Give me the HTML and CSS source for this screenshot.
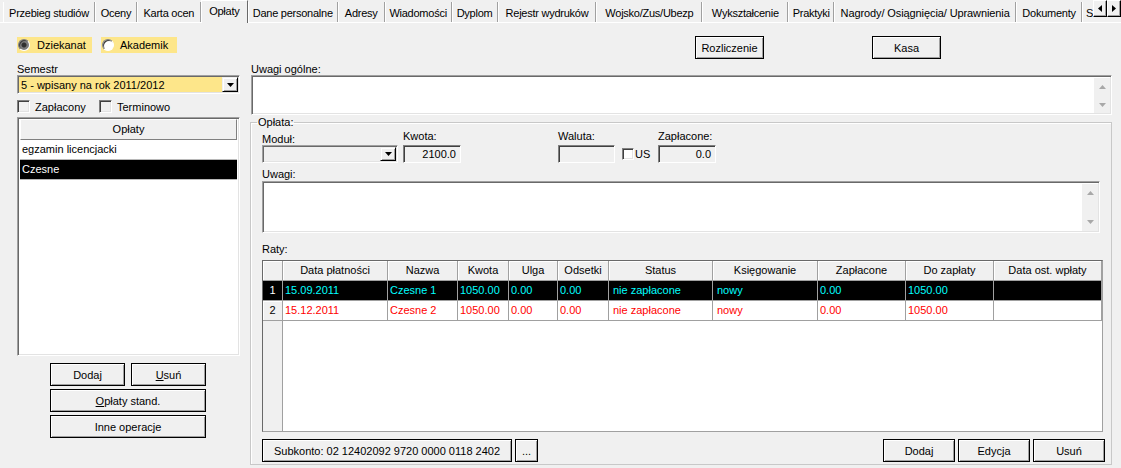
FILE: index.html
```html
<!DOCTYPE html>
<html lang="pl">
<head>
<meta charset="utf-8">
<title>Opłaty</title>
<link rel="stylesheet" href="styles.css">
</head>
<body>
<div class="tabs">
  <div class="tab t1">Przebieg studiów</div>
  <div class="tab t2">Oceny</div>
  <div class="tab t3">Karta ocen</div>
  <div class="tab t4 sel">Opłaty</div>
  <div class="tab t5">Dane personalne</div>
  <div class="tab t6">Adresy</div>
  <div class="tab t7">Wiadomości</div>
  <div class="tab t8">Dyplom</div>
  <div class="tab t9">Rejestr wydruków</div>
  <div class="tab t10">Wojsko/Zus/Ubezp</div>
  <div class="tab t11">Wykształcenie</div>
  <div class="tab t12">Praktyki</div>
  <div class="tab t13">Nagrody/ Osiągnięcia/ Uprawnienia</div>
  <div class="tab t14">Dokumenty</div>
  <div class="tab t15">S</div>
  <div class="spin">
    <div class="sbtn"><svg width="4" height="7" viewBox="0 0 4 7"><path d="M4 0 L0 3.5 L4 7 Z" fill="#000"/></svg></div>
    <div class="sbtn"><svg width="4" height="7" viewBox="0 0 4 7"><path d="M0 0 L4 3.5 L0 7 Z" fill="#000"/></svg></div>
  </div>
</div>

<div class="panel">
  <div class="left">
    <div class="radios">
      <div class="radio"><span class="dot on"></span><span>Dziekanat</span></div>
      <div class="radio"><span class="dot"></span><span>Akademik</span></div>
    </div>
    <div class="lbl sem">Semestr</div>
    <div class="combo yellow">
      <span class="cval">5 - wpisany na rok 2011/2012</span>
      <span class="dd"><svg width="7" height="4" viewBox="0 0 7 4"><path d="M0 0 H7 L3.5 4 Z" fill="#000"/></svg></span>
    </div>
    <div class="checks">
      <div class="chk"><span class="box"></span><span>Zapłacony</span></div>
      <div class="chk"><span class="box"></span><span>Terminowo</span></div>
    </div>
    <div class="list">
      <div class="lhead">Opłaty</div>
      <div class="lrow">egzamin licencjacki</div>
      <div class="lrow lsel">Czesne</div>
    </div>
    <div class="lbtns">
      <div class="brow">
        <button class="btn half">Dodaj</button>
        <button class="btn half"><u>U</u>suń</button>
      </div>
      <button class="btn wide"><u>O</u>płaty stand.</button>
      <button class="btn wide">Inne operacje</button>
    </div>
  </div>

  <div class="right">
    <div class="topbtns">
      <button class="btn tb">Rozliczenie</button>
      <button class="btn tb">Kasa</button>
    </div>
    <div class="lbl ug">Uwagi ogólne:</div>
    <div class="memo m1">
      <div class="vscroll">
        <svg width="7" height="4" viewBox="0 0 7 4"><path d="M0 4 H7 L3.5 0 Z" fill="#a8a8a8"/></svg>
        <svg width="7" height="4" viewBox="0 0 7 4"><path d="M0 0 H7 L3.5 4 Z" fill="#a8a8a8"/></svg>
      </div>
    </div>

    <fieldset class="grp">
      <legend>Opłata:</legend>
      <div class="frow">
        <div class="fld fmod">
          <div class="flbl">Moduł:</div>
          <div class="combo gray">
            <span class="cval"></span>
            <span class="dd"><svg width="7" height="4" viewBox="0 0 7 4"><path d="M0 0 H7 L3.5 4 Z" fill="#000"/></svg></span>
          </div>
        </div>
        <div class="fld fkw">
          <div class="flbl">Kwota:</div>
          <div class="ro">2100.0</div>
        </div>
        <div class="fld fwal">
          <div class="flbl">Waluta:</div>
          <div class="ro"></div>
        </div>
        <div class="us"><span class="box"></span><span>US</span></div>
        <div class="fld fzap">
          <div class="flbl">Zapłacone:</div>
          <div class="ro">0.0</div>
        </div>
      </div>

      <div class="lbl uw">Uwagi:</div>
      <div class="memo m2">
        <div class="vscroll">
          <svg width="7" height="4" viewBox="0 0 7 4"><path d="M0 4 H7 L3.5 0 Z" fill="#a8a8a8"/></svg>
          <svg width="7" height="4" viewBox="0 0 7 4"><path d="M0 0 H7 L3.5 4 Z" fill="#a8a8a8"/></svg>
        </div>
      </div>

      <div class="lbl raty">Raty:</div>
      <div class="grid">
        <div class="grow ghead">
          <div class="c ind"></div>
          <div class="c">Data płatności</div>
          <div class="c">Nazwa</div>
          <div class="c">Kwota</div>
          <div class="c">Ulga</div>
          <div class="c">Odsetki</div>
          <div class="c">Status</div>
          <div class="c">Księgowanie</div>
          <div class="c">Zapłacone</div>
          <div class="c">Do zapłaty</div>
          <div class="c">Data ost. wpłaty</div>
        </div>
        <div class="grow gsel">
          <div class="c ind">1</div>
          <div class="c">15.09.2011</div>
          <div class="c">Czesne 1</div>
          <div class="c">1050.00</div>
          <div class="c">0.00</div>
          <div class="c">0.00</div>
          <div class="c wide4">nie zapłacone</div>
          <div class="c wide4">nowy</div>
          <div class="c">0.00</div>
          <div class="c">1050.00</div>
          <div class="c"></div>
        </div>
        <div class="grow gred">
          <div class="c ind">2</div>
          <div class="c">15.12.2011</div>
          <div class="c">Czesne 2</div>
          <div class="c">1050.00</div>
          <div class="c">0.00</div>
          <div class="c">0.00</div>
          <div class="c wide4">nie zapłacone</div>
          <div class="c wide4">nowy</div>
          <div class="c">0.00</div>
          <div class="c">1050.00</div>
          <div class="c"></div>
        </div>
      </div>

      <div class="bbar">
        <button class="btn sub">Subkonto: 02 12402092 9720 0000 0118 2402</button>
        <button class="btn dots">...</button>
        <div class="spacer"></div>
        <button class="btn bb">Dodaj</button>
        <button class="btn bb">Edycja</button>
        <button class="btn bb">Usuń</button>
      </div>
    </fieldset>
  </div>
</div>
</body>
</html>
```

FILE: styles.css
```css
* { box-sizing: border-box; }
html, body { margin: 0; padding: 0; }
body {
  width: 1121px;
  height: 468px;
  overflow: hidden;
  background: #f0f0f0;
  font-family: "Liberation Sans", Arial, sans-serif;
  font-size: 11px;
  color: #000;
}

/* ---------- tabs ---------- */
.tabs {
  display: flex;
  align-items: flex-end;
  height: 23px;
  padding-left: 3px;
  border-bottom: 1px solid #fff;
}
.tab {
  height: 20px;
  border-left: 1px solid #fff;
  border-right: 1px solid #a0a0a0;
  display: flex;
  align-items: center;
  justify-content: center;
  white-space: nowrap;
  overflow: hidden;
  letter-spacing: -0.25px;
  padding-top: 1px;
}
.tab.sel {
  height: 23px;
  margin-bottom: -1px;
  border-top: 1px solid #fff;
  border-right: 1px solid #696969;
  background: #f0f0f0;
  position: relative;
  z-index: 1;
  align-items: flex-start;
  padding-top: 4px;
}
.t1 { width: 92px; }
.t2 { width: 42px; }
.t3 { width: 64px; }
.t4 { width: 47px; }
.t5 { width: 90px; }
.t6 { width: 47px; }
.t7 { width: 67px; }
.t8 { width: 46px; }
.t9 { width: 99px; }
.t10 { width: 106px; }
.t11 { width: 86px; }
.t12 { width: 46px; }
.t13 { width: 182px; letter-spacing: -0.1px; }
.t14 { width: 66px; }
.t15 { width: 11px; justify-content: flex-start; padding-left: 3px; border-right: none; }
.spin {
  display: flex;
  align-self: flex-start;
  height: 17px;
}
.sbtn {
  width: 14px;
  height: 17px;
  border: 1px solid;
  border-color: #fff #000 #000 #fff;
  box-shadow: inset -1px -1px #a0a0a0;
  background: #f0f0f0;
  display: flex;
  align-items: center;
  justify-content: center;
}

/* ---------- panel ---------- */
.panel {
  display: flex;
  height: 445px;
}
.left {
  width: 223px;
  margin-left: 17px;
  display: flex;
  flex-direction: column;
}
.right {
  width: 862px;
  margin-left: 10px;
  display: flex;
  flex-direction: column;
}

.lbl { height: 12px; line-height: 12px; white-space: nowrap; }

/* radios */
.radios {
  display: flex;
  gap: 9px;
  margin-top: 14px;
  height: 16px;
}
.radio {
  display: flex;
  align-items: center;
  background: #fde68a;
  padding: 0 6px 0 1px;
  gap: 7px;
}
.radio + .radio { padding-right: 9px; gap: 6px; }
.dot {
  width: 12px;
  height: 12px;
  border-radius: 50%;
  background: #fff;
  border: 1px solid;
  border-color: #808080 #fff #fff #808080;
  box-shadow: inset 1px 1px #404040;
}
.dot.on {
  background: radial-gradient(circle, #303030 0 2px, #7c7c7c 3px 100%);
}

.sem { margin-top: 10px; }

/* combo boxes */
.combo {
  display: flex;
  height: 19px;
  border: 1px solid;
  border-color: #a0a0a0 #fff #fff #a0a0a0;
  box-shadow: inset 1px 1px #696969, inset -1px -1px #e3e3e3;
  padding: 1px;
}
.combo.yellow { background: #fde68a; margin-top: 0; }
.combo.gray { background: #f0f0f0; height: 18px; width: 136px; }
.cval { flex: 1; padding: 1px 0 0 2px; line-height: 14px; white-space: nowrap; }
.dd {
  width: 16px;
  height: 100%;
  background: #f0f0f0;
  border: 1px solid;
  border-color: #f0f0f0 #000 #000 #f0f0f0;
  box-shadow: inset 1px 1px #fff, inset -1px -1px #a0a0a0;
  display: flex;
  align-items: center;
  justify-content: center;
}

/* checkboxes */
.checks {
  display: flex;
  margin-top: 6px;
  height: 13px;
}
.chk {
  display: flex;
  align-items: center;
  gap: 5px;
  width: 82px;
}
.box {
  width: 13px;
  height: 13px;
  background: #f0f0f0;
  border: 1px solid;
  border-color: #808080 #fff #fff #808080;
  box-shadow: inset 1px 1px #404040, inset -1px -1px #e3e3e3;
}

/* list */
.list {
  margin-top: 4px;
  height: 239px;
  background: #fff;
  border: 1px solid;
  border-color: #a0a0a0 #fff #fff #a0a0a0;
  box-shadow: inset 1px 1px #696969, inset -1px -1px #e3e3e3;
  padding: 1px 2px 2px 2px;
}
.lhead {
  height: 21px;
  line-height: 19px;
  text-align: center;
  background: #f0f0f0;
  border: 1px solid;
  border-color: #fff #808080 #808080 #fff;
}
.lrow {
  height: 20px;
  line-height: 19px;
  padding-left: 2px;
  border-bottom: 1px solid #b8b8b8;
}
.lrow.lsel { background: #000; color: #fff; }

/* buttons */
.btn {
  font: inherit;
  color: #000;
  padding: 0;
  margin: 0;
  border-radius: 0;
  height: 23px;
  border: 1px solid #000;
  background: #f0f0f0;
  box-shadow: inset 1px 1px #fff, inset -1px -1px #a0a0a0;
  display: flex;
  align-items: center;
  justify-content: center;
  white-space: nowrap;
}
.lbtns {
  margin-top: 7px;
  display: flex;
  flex-direction: column;
  align-items: center;
  gap: 3px;
  padding-right: 1px;
}
.brow { display: flex; gap: 6px; }
.half { width: 75px; }
.wide { width: 156px; }

/* right column */
.topbtns {
  display: flex;
  gap: 108px;
  margin-top: 13px;
  padding-left: 445px;
}
.tb { width: 69px; }
.ug { margin-top: 4px; margin-left: 1px; }

.memo {
  background: #fff;
  border: 1px solid;
  border-color: #a0a0a0 #fff #fff #a0a0a0;
  box-shadow: inset 1px 1px #696969, inset -1px -1px #e3e3e3;
  display: flex;
  justify-content: flex-end;
  padding: 2px 1px 1px 2px;
}
.m1 { height: 40px; width: 861px; margin-left: 1px; }
.vscroll {
  width: 16px;
  background: #f0f0f0;
  display: flex;
  flex-direction: column;
  justify-content: space-between;
  align-items: center;
  padding: 7px 0 6px;
}
.m2 { height: 52px; width: 838px; }
.m2 .vscroll { padding: 7px 0 7px; }

/* group box */
.grp {
  margin: 1px 0 0 0;
  padding: 0 0 0 11px;
  width: 862px;
  height: 349px;
  border: 1px solid #c8c8c8;
  box-shadow: inset 1px 1px #fff;
  min-width: 0;
}
.grp legend {
  padding: 0 1px;
  margin-left: -5px;
  line-height: 12px;
  height: 12px;
}
.frow {
  display: flex;
  align-items: flex-end;
  margin-top: 2px;
}
.fld { display: flex; flex-direction: column; }
.flbl { height: 13px; line-height: 13px; margin-bottom: 2px; white-space: nowrap; }
.fmod .flbl { margin-bottom: -1px; }
.fkw { margin-left: 5px; }
.fwal { margin-left: 97px; }
.ro {
  height: 18px;
  width: 58px;
  background: #f0f0f0;
  border: 1px solid;
  border-color: #808080 #fff #fff #808080;
  box-shadow: inset 1px 1px #404040;
  text-align: right;
  padding: 0 4px 0 0;
  line-height: 16px;
}
.fwal .ro { width: 57px; }
.us {
  display: flex;
  align-items: center;
  height: 18px;
  margin-left: 7px;
  gap: 1px;
  width: 36px;
}
.us .box { width: 12px; height: 12px; background: #fff; }

.uw { margin-top: 5px; height: 13px; line-height: 13px; }
.raty { margin-top: 10px; height: 13px; line-height: 13px; }

/* grid */
.grid {
  margin-top: 4px;
  width: 841px;
  height: 172px;
  border: 1px solid;
  border-color: #696969 #a0a0a0 #a0a0a0 #696969;
  background: linear-gradient(to right, #f0f0f0 0 19px, #a0a0a0 19px 20px, #fff 20px);
}
.grow {
  display: grid;
  grid-template-columns: 20px 105px 70px 51px 49px 51px 104px 105px 88px 88px 108px;
  height: 20px;
}
.c {
  border-right: 1px solid #a0a0a0;
  border-bottom: 1px solid #a0a0a0;
  padding-left: 2px;
  line-height: 19px;
  white-space: nowrap;
  overflow: hidden;
}
.c.wide4 { padding-left: 4px; }
.ghead .c {
  background: #f0f0f0;
  text-align: center;
  padding-left: 0;
  box-shadow: inset 1px 1px #fff;
}
.c.ind {
  background: #f0f0f0;
  text-align: center;
  padding-left: 0;
  box-shadow: inset 1px 1px #fff;
}
.gsel .c { background: #000; color: #00ffff; }
.gsel .c.ind { background: #000; color: #fff; box-shadow: none; }
.gred .c { background: #fff; color: #ff0000; }
.gred .c.ind { background: #f0f0f0; color: #000; }

/* bottom bar */
.bbar {
  display: flex;
  gap: 3px;
  margin-top: 7px;
  width: 843px;
}
.sub { width: 250px; }
.dots { width: 23px; }
.spacer { flex: 1; }
.bb { width: 72px; }
```
